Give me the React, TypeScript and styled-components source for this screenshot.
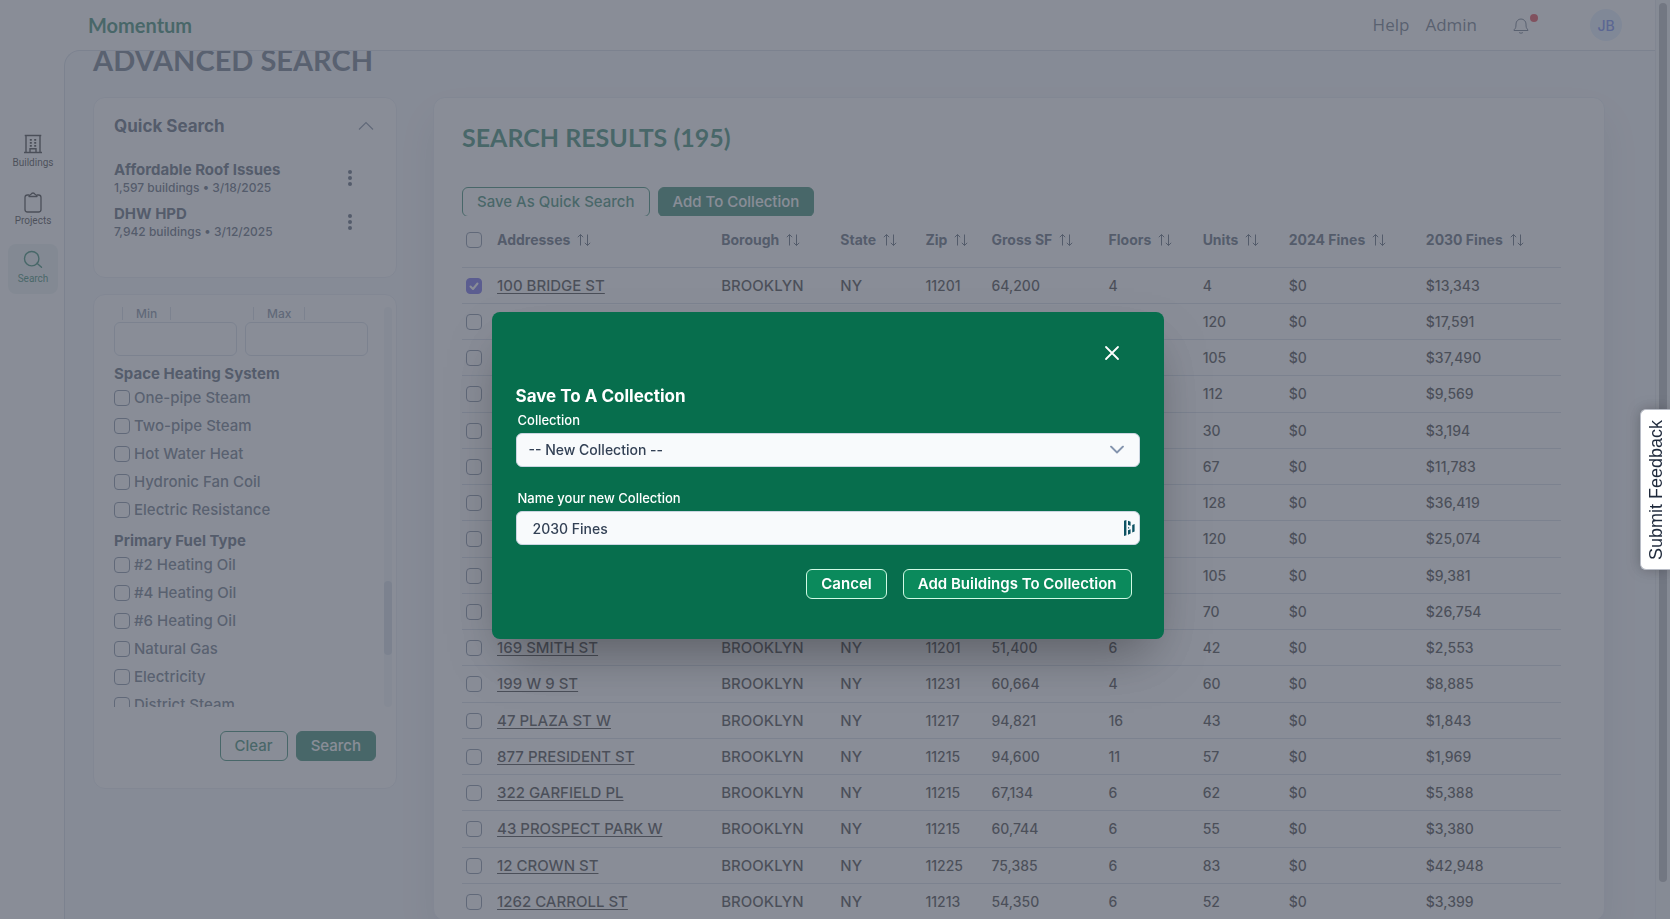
import React from "react";
import styled, { createGlobalStyle, css } from "styled-components";

const GlobalStyle = createGlobalStyle`
  *, *::before, *::after { box-sizing: border-box; }
  body { margin: 0; background: #fff; font-family: Inter, "Open Sans", sans-serif; font-size: 14px; font-weight: 500; color: #334155; }
  h1, h2, h3, p, ul, fieldset { margin: 0; padding: 0; border: 0; list-style: none; }
  button, input, select { font: inherit; }
`;

const Page = styled.div`
  display: flex;
  height: 100vh;
  overflow: hidden;
  background: #fff;
`;

const Shell = styled.div`
  flex: 1;
  min-width: 0;
  display: grid;
  grid-template-columns: 64px 1fr;
  grid-template-rows: 50px 1fr;
`;

const TopBar = styled.header`
  grid-column: 1 / -1;
  display: flex;
  align-items: center;
  padding: 0 33px 0 88px;
`;

const Brand = styled.a`
  font: 700 20px/28px Lato, sans-serif;
  color: #076e4d;
  text-decoration: none;
  margin-right: auto;
`;

const TopLink = styled.a`
  font: 400 17px/24px "Open Sans", sans-serif;
  color: #475569;
  text-decoration: none;
  margin-right: 16px;
`;

const BellButton = styled.button`
  position: relative;
  width: 32px;
  height: 32px;
  margin: 0 53px 0 12px;
  padding: 8px;
  border: 0;
  background: none;
  color: #475569;
`;

const BellDot = styled.span`
  position: absolute;
  top: 5px;
  right: -1px;
  width: 8px;
  height: 8px;
  border-radius: 50%;
  background: #e11d2a;
`;

const Avatar = styled.button`
  width: 32px;
  height: 32px;
  padding: 0;
  border: 0;
  border-radius: 50%;
  background: #dbeafe;
  color: #4f6bed;
`;

const SideNav = styled.nav`
  display: flex;
  flex-direction: column;
  align-items: center;
  gap: 8px;
  padding: 78px 6px 0 8px;
`;

const NavItem = styled.a<{ $active?: boolean }>`
  display: flex;
  flex-direction: column;
  align-items: center;
  width: 50px;
  height: 50px;
  padding-top: 6px;
  border-radius: 8px;
  font: 400 10px/14px Roboto, sans-serif;
  text-decoration: none;
  color: ${(p) => (p.$active ? "#076e4d" : "#111")};
  background: ${(p) => (p.$active ? "#e6f0ef" : "transparent")};
  svg { display: block; }
`;

const Main = styled.main`
  overflow: hidden;
  border: 1px solid #cbd5e1;
  border-width: 1px 0 0 1px;
  border-top-left-radius: 16px;
  background: #f4f6fa;
  padding: 0 50px 0 28px;
`;

const PageTitle = styled.h1`
  font: 700 29px/36px Lato, sans-serif;
  color: #475569;
  margin: -9px 0 19px;
`;

const Columns = styled.div`
  display: flex;
  align-items: flex-start;
  gap: 36px;
`;

const FilterColumn = styled.div`
  flex: none;
  width: 304px;
  display: flex;
  flex-direction: column;
  gap: 16px;
`;

const card = css`
  border: 1px solid #e2e8f0;
  border-radius: 12px;
  background: #fff;
`;

const QuickCard = styled.section`
  ${card}
  height: 181px;
  padding: 16px 20px;
`;

const QuickHead = styled.div`
  display: flex;
  justify-content: space-between;
  align-items: center;
  padding-right: 2px;
  height: 24px;
  margin-bottom: 18px;
`;

const QuickTitle = styled.h2`
  font-size: 17px;
  line-height: 24px;
  font-weight: 700;
`;

const IconButton = styled.button`
  display: flex;
  padding: 0;
  border: 0;
  background: none;
  color: inherit;
`;

const QuickItem = styled.li`
  display: flex;
  justify-content: space-between;
  align-items: center;
  height: 44px;
  padding-right: 23px;
`;

const QuickName = styled.h3`
  font-size: 15px;
  line-height: 20px;
  font-weight: 700;
`;

const QuickMeta = styled.p`
  font-size: 12px;
  line-height: 16px;
`;

const FilterCard = styled.section`
  ${card}
  height: 495px;
  padding: 12px 4px 0 20px;
`;

const FilterScroll = styled.div`
  display: flex;
  justify-content: space-between;
  height: 400px;
  overflow: hidden;
`;

const FilterBody = styled.form`
  width: 254px;
`;

const RangeRow = styled.div`
  display: grid;
  grid-template-columns: 1fr 1fr;
  gap: 8px;
  padding-bottom: 1px;
`;

const RangeField = styled.label`
  display: flex;
  flex-direction: column;
  align-items: flex-start;
  font-size: 12px;
  line-height: 13px;
  color: #64748b;
  span {
    margin: 0 0 2px 8px;
    padding: 0 13px;
    border: 1px solid #cbd5e1;
    border-width: 0 1px;
  }
`;

const RangeInput = styled.input`
  width: 100%;
  height: 34px;
  border: 1px solid #cbd5e1;
  border-radius: 6px;
  background: #fff;
`;

const Group = styled.fieldset`
  min-width: 0;
`;

const GroupTitle = styled.legend`
  padding: 7px 0 0;
  font-size: 15px;
  line-height: 20px;
  font-weight: 700;
`;

const CheckRow = styled.label`
  display: flex;
  align-items: center;
  gap: 4px;
  height: 28px;
  font-size: 15px;
  line-height: 20px;
  color: #475569;
`;

const CheckBox = styled.input.attrs({ type: "checkbox" })`
  appearance: none;
  flex: none;
  display: block;
  width: 16px;
  height: 16px;
  margin: 0;
  border: 1px solid #64748b;
  border-radius: 4px;
  background: #fff;
  &:checked {
    border-color: #4f46e5;
    background: #4f46e5 url("data:image/svg+xml,%3Csvg xmlns='http://www.w3.org/2000/svg' viewBox='0 0 14 14' fill='none' stroke='white' stroke-width='2' stroke-linecap='round' stroke-linejoin='round'%3E%3Cpath d='M3.5 7.5L6 10l4.500-5.500'/%3E%3C/svg%3E") center / 14px;
  }
`;

const ScrollTrack = styled.div`
  width: 8px;
  border-radius: 4px;
  background: #eef2f6;
  padding-top: 274px;
`;

const ScrollThumb = styled.div`
  height: 74px;
  border-radius: 4px;
  background: #cbd5e1;
`;

const FilterActions = styled.div`
  display: flex;
  justify-content: flex-end;
  gap: 8px;
  padding: 24px 16px 0 0;
`;

const Button = styled.button<{ $kind: "outline" | "solid" | "modal" }>`
  height: 30px;
  padding: 0 14px;
  border: 1px solid #076e4d;
  border-radius: 6px;
  font-size: 15px;
  font-weight: 500;
  line-height: 20px;
  white-space: nowrap;
  ${(p) => p.$kind === "outline" && css`background: #fff; color: #076e4d;`}
  ${(p) => p.$kind === "solid" && css`background: #076e4d; color: #fff;`}
  ${(p) => p.$kind === "modal" && css`background: #0b8a5c; border-color: #d1fae5; color: #fff; font-weight: 600;`}
`;

const Results = styled.section`
  ${card}
  flex: 1;
  min-width: 0;
  padding: 23px 43px 0 28px;
  box-shadow: 0 20px 40px rgba(15, 23, 42, 0.12);
`;

const ResultsTitle = styled.h2`
  font: 700 25px/32px Lato, sans-serif;
  color: #076e4d;
`;

const ResultsActions = styled.div`
  display: flex;
  gap: 8px;
  height: 29px;
  margin-top: 34px;
  overflow: hidden;
`;

const Table = styled.table`
  width: 100%;
  table-layout: fixed;
  border-collapse: separate;
  border-spacing: 0;
  line-height: 20px;
  color: #111;
  white-space: nowrap;
  th, td { padding: 0; text-align: left; border-bottom: 1px solid #cbd5e1; }
  th { height: 52px; padding-bottom: 4px; font-weight: 700; color: #334155; }
  th:first-child, td:first-child { padding-left: 4px; }
  td { height: 36px; }
  tbody tr:nth-child(4n) td { height: 37px; }
`;

const TextCell = styled.td`
  font-size: 15px;
`;

const HeadCell = styled.div`
  display: flex;
  align-items: center;
  gap: 7px;
`;

const AddressLink = styled.a`
  color: inherit;
  text-underline-offset: 2px;
`;

const PageTrack = styled.div`
  flex: none;
  width: 15px;
  padding: 3px 3px 0;
  border-left: 1px solid #dfe3ea;
  background: #f4f5f7;
`;

const PageThumb = styled.div`
  height: 96%;
  border-radius: 4px;
  background: #a6a9ae;
`;

const Overlay = styled.div`
  position: fixed;
  inset: 0;
  display: flex;
  align-items: center;
  justify-content: center;
  padding: 32px 15px 0 0;
  background: rgba(96, 101, 115, 0.74);
`;

const Dialog = styled.div`
  width: 672px;
  padding: 28px 24px 40px;
  border-radius: 8px;
  background: #076e4d;
  color: #fff;
  box-shadow: 0 25px 50px -12px rgba(0, 0, 0, 0.35);
`;

const DialogHead = styled.div`
  display: flex;
  justify-content: flex-end;
  padding: 1px 16px 19px 0;
`;

const DialogTitle = styled.h2`
  padding-bottom: 2px;
  font-size: 17px;
  line-height: 24px;
  font-weight: 700;
`;

const Fields = styled.div`
  display: flex;
  flex-direction: column;
  gap: 21px;
  margin-bottom: 24px;
`;

const Field = styled.label`
  display: block;
  font-size: 13px;
  line-height: 20px;
  font-weight: 500;
  > span:first-child { display: block; padding: 0 2px 3px; }
`;

const Control = styled.span`
  position: relative;
  display: block;
  svg { position: absolute; top: 50%; transform: translateY(-50%); }
`;

const controlBox = css`
  display: block;
  width: 100%;
  height: 34px;
  border: 1px solid #cbd5e1;
  border-radius: 6px;
  background: #f8fafc;
  color: #334155;
  font-size: 14px;
  font-weight: 500;
`;

const Select = styled.select`
  ${controlBox}
  appearance: none;
  padding: 0 40px 0 12px;
`;

const TextInput = styled.input`
  ${controlBox}
  padding: 0 24px 0 16px;
`;

const ChevronDown = styled.svg`
  right: 16px;
`;

const ManagerMark = styled.svg`
  right: 5px;
`;

const DialogActions = styled.div`
  display: flex;
  justify-content: flex-end;
  gap: 16px;
  padding-right: 8px;
`;

const FeedbackTab = styled.button`
  position: fixed;
  right: 0;
  top: 409px;
  width: 30px;
  height: 161px;
  padding: 0;
  border: 1px solid #b8bcc6;
  border-left: 0;
  border-radius: 0 6px 6px 0;
  background: #fff;
  color: #1e293b;
  font: 400 18px/28px "Liberation Sans", sans-serif;
  writing-mode: vertical-rl;
  transform: rotate(180deg);
  box-shadow: 0 0 14px rgba(0, 0, 0, 0.25);
`;

const SortIcon = () => (
  <svg width="14" height="14" viewBox="0 0 14 14" fill="none" stroke="currentColor" strokeWidth="1" aria-hidden="true">
    <path d="M3.500 12.500V1.500M.8 4.200L3.500 1.500l2.700 2.700M10.500 1.500v11M7.800 9.800l2.700 2.700 2.700-2.700" />
  </svg>
);

const DotsIcon = () => (
  <svg width="6" height="18" viewBox="0 0 6 18" fill="currentColor" aria-hidden="true">
    <circle cx="3" cy="3" r="2" />
    <circle cx="3" cy="9" r="2" />
    <circle cx="3" cy="15" r="2" />
  </svg>
);

const BuildingIcon = () => (
  <svg width="20" height="22" viewBox="0 0 20 22" fill="none" stroke="currentColor" strokeWidth="1.4" aria-hidden="true">
    <path d="M1 18.500h18M3 18.500v-17M17 18.500v-17M1.700 1.500h16.600M7 18.500v-3.700h6v3.700" />
    <path d="M6.800 5.800h2M11.200 5.800h2M6.800 8.800h2M11.200 8.800h2M6.800 11.800h2M11.200 11.800h2" strokeWidth="1.700" />
  </svg>
);

const ClipboardIcon = () => (
  <svg width="20" height="22" viewBox="0 0 20 22" fill="none" stroke="currentColor" strokeWidth="1.300" aria-hidden="true">
    <path d="M6 3H4.500A2.500 2.500 0 0 0 2 5.500v12A2.500 2.500 0 0 0 4.500 20h11a2.500 2.500 0 0 0 2.500-2.500v-12A2.500 2.500 0 0 0 15.500 3H14" />
    <path d="M6 4.500c0-1.500.9-2 2-2.200C8.500 1.300 9.200 1 10 1s1.500.3 2 1.300c1.100.2 2 .7 2 2.200z" strokeLinejoin="round" />
  </svg>
);

const SearchIcon = () => (
  <svg width="20" height="22" viewBox="0 0 20 22" fill="none" stroke="currentColor" strokeWidth="1.400" aria-hidden="true">
    <circle cx="8.700" cy="8.700" r="7.200" />
    <path d="M14 13.300l4.500 3.900" strokeLinecap="round" />
  </svg>
);

const navItems = [
  { label: "Buildings", Icon: BuildingIcon },
  { label: "Projects", Icon: ClipboardIcon },
  { label: "Search", Icon: SearchIcon, active: true },
];

const quickSearches = [
  { name: "Affordable Roof Issues", meta: "1,597 buildings • 3/18/2025" },
  { name: "DHW HPD", meta: "7,942 buildings • 3/12/2025" },
];

const filterGroups = [
  { title: "Space Heating System", options: ["One-pipe Steam", "Two-pipe Steam", "Hot Water Heat", "Hydronic Fan Coil", "Electric Resistance"] },
  { title: "Primary Fuel Type", options: ["#2 Heating Oil", "#4 Heating Oil", "#6 Heating Oil", "Natural Gas", "Electricity", "District Steam"] },
];

const columns: [string, number][] = [
  ["Addresses", 224], ["Borough", 119], ["State", 85], ["Zip", 66], ["Gross SF", 117],
  ["Floors", 94], ["Units", 86], ["2024 Fines", 137], ["2030 Fines", 135],
];

const Col = styled.col<{ $share: number }>`
  width: ${(p) => (p.$share / 1098) * 100}%;
`;

type Row = { address?: string; zip?: string; sf?: string; floors?: string; units: string; fine: string };

const rows: Row[] = [
  { address: "100 BRIDGE ST", zip: "11201", sf: "64,200", floors: "4", units: "4", fine: "$13,343" },
  { units: "120", fine: "$17,591" },
  { units: "105", fine: "$37,490" },
  { units: "112", fine: "$9,569" },
  { units: "30", fine: "$3,194" },
  { units: "67", fine: "$11,783" },
  { units: "128", fine: "$36,419" },
  { units: "120", fine: "$25,074" },
  { units: "105", fine: "$9,381" },
  { units: "70", fine: "$26,754" },
  { address: "169 SMITH ST", zip: "11201", sf: "51,400", floors: "6", units: "42", fine: "$2,553" },
  { address: "199 W 9 ST", zip: "11231", sf: "60,664", floors: "4", units: "60", fine: "$8,885" },
  { address: "47 PLAZA ST W", zip: "11217", sf: "94,821", floors: "16", units: "43", fine: "$1,843" },
  { address: "877 PRESIDENT ST", zip: "11215", sf: "94,600", floors: "11", units: "57", fine: "$1,969" },
  { address: "322 GARFIELD PL", zip: "11215", sf: "67,134", floors: "6", units: "62", fine: "$5,388" },
  { address: "43 PROSPECT PARK W", zip: "11215", sf: "60,744", floors: "6", units: "55", fine: "$3,380" },
  { address: "12 CROWN ST", zip: "11225", sf: "75,385", floors: "6", units: "83", fine: "$42,948" },
  { address: "1262 CARROLL ST", zip: "11213", sf: "54,350", floors: "6", units: "52", fine: "$3,399" },
];

export default function App() {
  return (
    <>
      <GlobalStyle />
      <Page>
        <Shell>
          <TopBar>
            <Brand href="#">Momentum</Brand>
            <TopLink href="#">Help</TopLink>
            <TopLink href="#">Admin</TopLink>
            <BellButton aria-label="Notifications">
              <svg width="16" height="17" viewBox="0 0 16 17" fill="none" stroke="currentColor" aria-hidden="true">
                <path d="M1 12.800c1.700-1.300 2-2.600 2-5.800a5 5 0 0 1 10 0c0 3.200.3 4.500 2 5.800v.7H1z" strokeLinejoin="round" />
                <path d="M6 15.200c.5 1.300 3.500 1.300 4 0" />
              </svg>
              <BellDot />
            </BellButton>
            <Avatar>JB</Avatar>
          </TopBar>
          <SideNav>
            {navItems.map(({ label, Icon, active }) => (
              <NavItem key={label} href="#" $active={active}>
                <Icon />
                {label}
              </NavItem>
            ))}
          </SideNav>
          <Main>
            <PageTitle>ADVANCED SEARCH</PageTitle>
            <Columns>
              <FilterColumn>
                <QuickCard>
                  <QuickHead>
                    <QuickTitle>Quick Search</QuickTitle>
                    <IconButton aria-label="Collapse">
                      <svg width="16" height="10" viewBox="0 0 16 10" fill="none" stroke="#64748b" strokeWidth="1.200" aria-hidden="true">
                        <path d="M1 8.500l7-7 7 7" />
                      </svg>
                    </IconButton>
                  </QuickHead>
                  <ul>
                    {quickSearches.map((q) => (
                      <QuickItem key={q.name}>
                        <div>
                          <QuickName>{q.name}</QuickName>
                          <QuickMeta>{q.meta}</QuickMeta>
                        </div>
                        <IconButton aria-label={`Options for ${q.name}`}><DotsIcon /></IconButton>
                      </QuickItem>
                    ))}
                  </ul>
                </QuickCard>
                <FilterCard>
                  <FilterScroll>
                    <FilterBody>
                      <RangeRow>
                        <RangeField><span>Min</span><RangeInput /></RangeField>
                        <RangeField><span>Max</span><RangeInput /></RangeField>
                      </RangeRow>
                      {filterGroups.map((g) => (
                        <Group key={g.title}>
                          <GroupTitle>{g.title}</GroupTitle>
                          {g.options.map((o) => (
                            <CheckRow key={o}><CheckBox />{o}</CheckRow>
                          ))}
                        </Group>
                      ))}
                    </FilterBody>
                    <ScrollTrack><ScrollThumb /></ScrollTrack>
                  </FilterScroll>
                  <FilterActions>
                    <Button $kind="outline">Clear</Button>
                    <Button $kind="solid">Search</Button>
                  </FilterActions>
                </FilterCard>
              </FilterColumn>
              <Results>
                <ResultsTitle>SEARCH RESULTS (195)</ResultsTitle>
                <ResultsActions>
                  <Button $kind="outline">Save As Quick Search</Button>
                  <Button $kind="solid">Add To Collection</Button>
                </ResultsActions>
                <Table>
                  <colgroup>
                    <Col $share={35} />
                    {columns.map(([name, share]) => <Col key={name} $share={share} />)}
                  </colgroup>
                  <thead>
                    <tr>
                      <th><CheckBox aria-label="Select all" /></th>
                      {columns.map(([name]) => (
                        <th key={name}><HeadCell>{name}<SortIcon /></HeadCell></th>
                      ))}
                    </tr>
                  </thead>
                  <tbody>
                    {rows.map((r, i) => (
                      <tr key={i}>
                        <td><CheckBox aria-label={`Select row ${i + 1}`} defaultChecked={i === 0} /></td>
                        <TextCell>{r.address && <AddressLink href="#">{r.address}</AddressLink>}</TextCell>
                        <TextCell>{r.address && "BROOKLYN"}</TextCell>
                        <TextCell>{r.address && "NY"}</TextCell>
                        <td>{r.zip}</td>
                        <td>{r.sf}</td>
                        <td>{r.floors}</td>
                        <td>{r.units}</td>
                        <td>$0</td>
                        <td>{r.fine}</td>
                      </tr>
                    ))}
                  </tbody>
                </Table>
              </Results>
            </Columns>
          </Main>
        </Shell>
        <PageTrack><PageThumb /></PageTrack>
      </Page>
      <Overlay>
        <Dialog role="dialog" aria-modal="true" aria-labelledby="dialog-title">
          <DialogHead>
            <IconButton aria-label="Close">
              <svg width="24" height="24" viewBox="0 0 24 24" fill="none" stroke="currentColor" strokeWidth="1.800" strokeLinecap="round" aria-hidden="true">
                <path d="M6 6l12 12M18 6L6 18" />
              </svg>
            </IconButton>
          </DialogHead>
          <DialogTitle id="dialog-title">Save To A Collection</DialogTitle>
          <Fields>
            <Field>
              <span>Collection</span>
              <Control>
                <Select><option>-- New Collection --</option></Select>
                <ChevronDown width="14" height="9" viewBox="0 0 14 9" fill="none" stroke="#8494ae" strokeWidth="1.800" strokeLinecap="round" strokeLinejoin="round" aria-hidden="true">
                  <path d="M1 1l6 6 6-6" />
                </ChevronDown>
              </Control>
            </Field>
            <Field>
              <span>Name your new Collection</span>
              <Control>
                <TextInput defaultValue="2030 Fines" />
                <ManagerMark width="11" height="16" viewBox="0 0 11 16" fill="#0e5263" aria-hidden="true">
                  <path d="M0 .8L2.400 0v15.200L0 16zM4 .8l2.600 1v4L4 5zM4 10.200l2.600-1v4.400L4 14.800zM8.200 5l2.400-1v7.400l-2.400 1zM4 7.200h1.200v1.200H4z" />
                </ManagerMark>
              </Control>
            </Field>
          </Fields>
          <DialogActions>
            <Button $kind="modal">Cancel</Button>
            <Button $kind="modal">Add Buildings To Collection</Button>
          </DialogActions>
        </Dialog>
      </Overlay>
      <FeedbackTab>Submit Feedback</FeedbackTab>
    </>
  );
}
